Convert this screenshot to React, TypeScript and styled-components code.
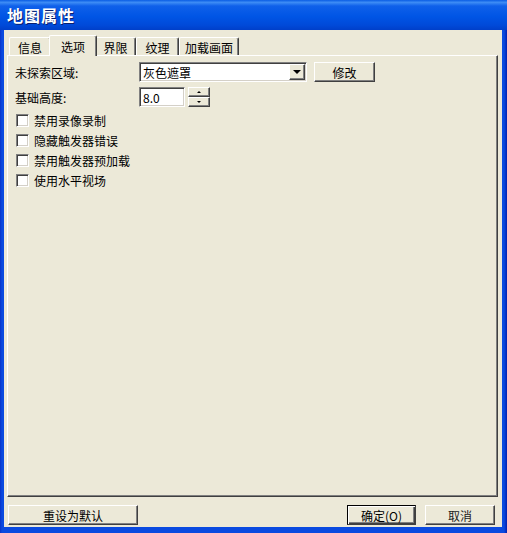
import { useState } from 'react';
import styled, { createGlobalStyle } from 'styled-components';

const GlobalStyle = createGlobalStyle`
  html, body {
    margin: 0;
    padding: 0;
    background: #ece9d8;
  }
  * {
    box-sizing: border-box;
  }
`;

const font = `"Noto Sans CJK SC", "Liberation Sans", sans-serif`;

const Window = styled.div`
  width: 507px;
  height: 533px;
  display: flex;
  flex-direction: column;
  background: #0842d6;
  font-family: ${font};
  font-size: 12px;
  color: #000;
  overflow: hidden;
`;

const TitleBar = styled.div`
  height: 30px;
  display: flex;
  align-items: center;
  padding-left: 7px;
  background: linear-gradient(
    to bottom,
    #0a5de4 0%,
    #3d8cf5 8%,
    #0f60ea 20%,
    #0055e5 55%,
    #0049d8 85%,
    #003fc9 100%
  );
  color: #fff;
  font-weight: bold;
  font-size: 16px;
  letter-spacing: 1px;
  text-shadow: 1px 1px 0 #0a1e6e;
`;

const Frame = styled.div`
  flex: 1;
  display: flex;
  padding: 0 5px 6px 4px;
  background: linear-gradient(to right, #0832c8, #0a4ae0 2px, #0a4ae0 calc(100% - 3px), #0020b0);
`;

const Body = styled.div`
  flex: 1;
  display: flex;
  flex-direction: column;
  background: #ece9d8;
  padding: 5px 4px 2px 3px;
`;

const TabStrip = styled.div`
  height: 20px;
  display: flex;
  align-items: flex-end;
  padding-left: 2px;
  position: relative;
  z-index: 1;
`;

const Tab = styled.div<{ $w: number; $active?: boolean }>`
  width: ${(p) => p.$w}px;
  height: ${(p) => (p.$active ? 21 : 18)}px;
  margin: ${(p) => (p.$active ? '0 -2px -1px -2px' : '0')};
  display: flex;
  align-items: center;
  justify-content: center;
  background: #ece9d8;
  border-top: 1px solid #fff;
  border-left: 1px solid #fff;
  border-right: 1px solid #404040;
  box-shadow: inset -1px 0 0 #808080;
  border-top-left-radius: 2px;
  border-top-right-radius: 2px;
  padding-top: ${(p) => (p.$active ? 0 : 1)}px;
  position: relative;
  z-index: ${(p) => (p.$active ? 2 : 1)};
`;

const Panel = styled.div`
  flex: 1;
  border-top: 1px solid #fff;
  border-left: 1px solid #fff;
  border-right: 1px solid #404040;
  border-bottom: 1px solid #404040;
  box-shadow: inset -1px -1px 0 #808080;
  padding: 6px 7px;
  display: flex;
  flex-direction: column;
`;

const FieldRow = styled.div<{ $mt?: number }>`
  display: flex;
  align-items: center;
  height: 20px;
  margin-top: ${(p) => p.$mt ?? 0}px;
`;

const Label = styled.div`
  width: 124px;
  padding-top: 1px;
`;

const Sunken = styled.div<{ $w: number }>`
  width: ${(p) => p.$w}px;
  height: 20px;
  background: #fff;
  border-top: 1px solid #808080;
  border-left: 1px solid #808080;
  border-right: 1px solid #fff;
  border-bottom: 1px solid #fff;
  box-shadow: inset 1px 1px 0 #404040, inset -1px -1px 0 #d4d0c8;
  display: flex;
  align-items: center;
  padding: 0 2px 0 3px;
`;

const ComboText = styled.div`
  flex: 1;
`;

const DropButton = styled.div`
  width: 16px;
  height: 16px;
  background: #ece9d8;
  border-top: 1px solid #fff;
  border-left: 1px solid #fff;
  border-right: 1px solid #404040;
  border-bottom: 1px solid #404040;
  box-shadow: inset -1px -1px 0 #808080;
  display: flex;
  align-items: center;
  justify-content: center;
  margin-right: -1px;
`;

const Arrow = styled.div<{ $up?: boolean; $size: number }>`
  width: 0;
  height: 0;
  border-left: ${(p) => p.$size}px solid transparent;
  border-right: ${(p) => p.$size}px solid transparent;
  ${(p) =>
    p.$up
      ? `border-bottom: ${p.$size}px solid #000;`
      : `border-top: ${p.$size}px solid #000;`}
`;

const Raised = styled.div<{ $w: number; $default?: boolean; $faded?: boolean }>`
  width: ${(p) => p.$w}px;
  height: 20px;
  display: flex;
  align-items: center;
  justify-content: center;
  background: #ece9d8;
  border-top: 1px solid ${(p) => (p.$default ? '#000' : '#fff')};
  border-left: 1px solid ${(p) => (p.$default ? '#000' : '#fff')};
  border-right: 1px solid #404040;
  border-bottom: 1px solid #404040;
  box-shadow: ${(p) =>
    p.$default
      ? 'inset 1px 1px 0 #fff, inset -1px -1px 0 #404040, inset -2px -2px 0 #808080'
      : 'inset -1px -1px 0 #808080'};
  color: ${(p) => (p.$faded ? '#222' : '#000')};
  padding-top: 1px;
`;

const Spin = styled.div`
  display: flex;
  flex-direction: column;
  margin-left: 3px;
  height: 20px;
`;

const SpinButton = styled.div`
  width: 22px;
  height: 10px;
  background: #ece9d8;
  border-top: 1px solid #fff;
  border-left: 1px solid #fff;
  border-right: 1px solid #404040;
  border-bottom: 1px solid #404040;
  box-shadow: inset -1px -1px 0 #808080;
  display: flex;
  align-items: center;
  justify-content: center;
`;

const CheckList = styled.div`
  display: flex;
  flex-direction: column;
  margin-top: 3px;
`;

const CheckRow = styled.label`
  display: flex;
  align-items: center;
  height: 20px;
  padding-left: 1px;
  cursor: default;
`;

const Box = styled.span`
  width: 13px;
  height: 13px;
  background: #fff;
  border-top: 1px solid #808080;
  border-left: 1px solid #808080;
  border-right: 1px solid #fff;
  border-bottom: 1px solid #fff;
  box-shadow: inset 1px 1px 0 #404040, inset -1px -1px 0 #d4d0c8;
  margin-right: 5px;
  display: flex;
  align-items: center;
  justify-content: center;
  font-size: 10px;
  line-height: 1;
`;

const Footer = styled.div`
  display: flex;
  align-items: center;
  margin-top: 8px;
  padding: 0 3px 0 1px;
`;

const Spacer = styled.div`
  flex: 1;
`;

const ButtonGap = styled.div<{ $w: number }>`
  width: ${(p) => p.$w}px;
`;

const tabs = [
  { name: '信息', w: 42 },
  { name: '选项', w: 44 },
  { name: '界限', w: 41 },
  { name: '纹理', w: 43 },
  { name: '加载画面', w: 60 },
];

const options = ['禁用录像录制', '隐藏触发器错误', '禁用触发器预加载', '使用水平视场'];

export default function App() {
  const [checked, setChecked] = useState<boolean[]>([false, false, false, false]);

  const toggle = (i: number) =>
    setChecked((c) => c.map((v, j) => (j === i ? !v : v)));

  return (
    <>
      <GlobalStyle />
      <Window>
        <TitleBar>地图属性</TitleBar>
        <Frame>
          <Body>
            <TabStrip>
              {tabs.map((t, i) => (
                <Tab key={t.name} $w={t.w + (i === 1 ? 4 : 0)} $active={i === 1}>
                  {t.name}
                </Tab>
              ))}
            </TabStrip>
            <Panel>
              <FieldRow>
                <Label>未探索区域:</Label>
                <Sunken $w={168}>
                  <ComboText>灰色遮罩</ComboText>
                  <DropButton>
                    <Arrow $size={4} />
                  </DropButton>
                </Sunken>
                <ButtonGap $w={7} />
                <Raised $w={61}>修改</Raised>
              </FieldRow>
              <FieldRow $mt={5}>
                <Label>基础高度:</Label>
                <Sunken $w={46}>8.0</Sunken>
                <Spin>
                  <SpinButton>
                    <Arrow $up $size={2} />
                  </SpinButton>
                  <SpinButton>
                    <Arrow $size={2} />
                  </SpinButton>
                </Spin>
              </FieldRow>
              <CheckList>
                {options.map((o, i) => (
                  <CheckRow key={o} onClick={() => toggle(i)}>
                    <Box>{checked[i] ? '✓' : ''}</Box>
                    {o}
                  </CheckRow>
                ))}
              </CheckList>
            </Panel>
            <Footer>
              <Raised $w={130}>重设为默认</Raised>
              <Spacer />
              <Raised $w={69} $default>
                确定(O)
              </Raised>
              <ButtonGap $w={9} />
              <Raised $w={70} $faded>
                取消
              </Raised>
            </Footer>
          </Body>
        </Frame>
      </Window>
    </>
  );
}
